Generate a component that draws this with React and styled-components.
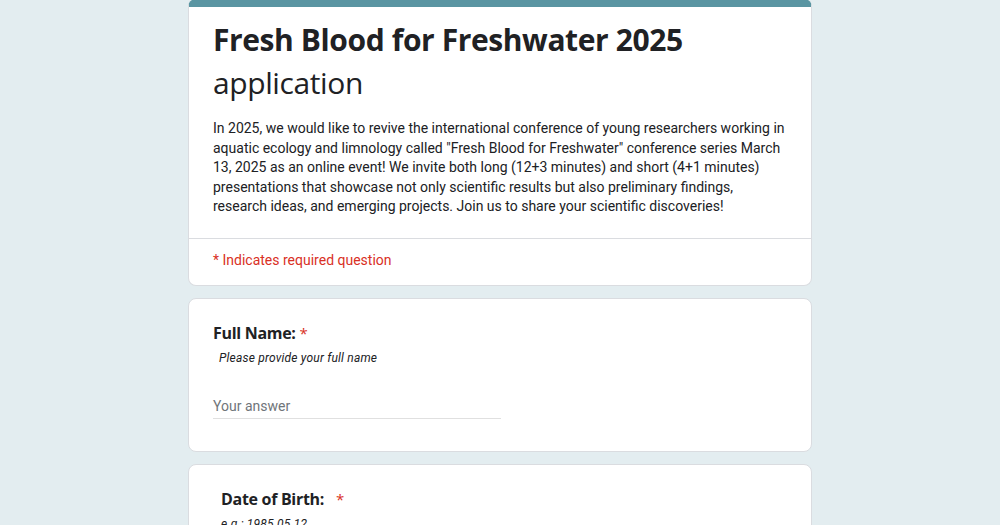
import styled, { createGlobalStyle } from 'styled-components';

const GlobalStyle = createGlobalStyle`
  body {
    margin: 0;
    background-color: #e3edf0;
    font-family: Roboto, "Liberation Sans", sans-serif;
  }
`;

export default function App() {
  return (
    <>
      <GlobalStyle />
      <Page>
        <HeaderCard>
          <Title>
            <strong>Fresh Blood for Freshwater 2025</strong>
            <span>application</span>
          </Title>
          <Description>
            In 2025, we would like to revive the international conference of young researchers working in
            aquatic ecology and limnology called "Fresh Blood for Freshwater" conference series March
            13, 2025 as an online event! We invite both long (12+3 minutes) and short (4+1 minutes)
            presentations that showcase not only scientific results but also preliminary findings,
            research ideas, and emerging projects. Join us to share your scientific discoveries!
          </Description>
          <Required>* Indicates required question</Required>
        </HeaderCard>

        <QuestionCard>
          <Label>
            Full Name: <Star>*</Star>
          </Label>
          <Hint>Please provide your full name</Hint>
          <Answer>Your answer</Answer>
        </QuestionCard>

        <QuestionCard $indent>
          <Label>
            Date of Birth: <Star $gap>*</Star>
          </Label>
          <Hint $flush>e.g.: 1985.05.12</Hint>
        </QuestionCard>
      </Page>
    </>
  );
}

const Page = styled.main`
  width: 624px;
  margin: 0 auto;
  display: flex;
  flex-direction: column;
  gap: 12px;
  height: 525px;
  overflow: hidden;
`;

const HeaderCard = styled.section`
  background-color: #fff;
  border: 1px solid #dadce0;
  border-top: 8px solid #5a95a2;
  border-radius: 8px;
  margin-top: -1px;
  box-sizing: border-box;
  flex-shrink: 0;
`;

const Title = styled.h1`
  margin: 0;
  padding: 11px 24px 0;
  display: flex;
  flex-direction: column;
  font-family: "Open Sans", sans-serif;
  font-size: 30px;
  line-height: 43px;
  color: #202124;
  letter-spacing: -0.4px;

  strong {
    font-weight: 700;
  }

  span {
    font-weight: 400;
  }
`;

const Description = styled.p`
  margin: 0;
  padding: 15px 24px 21px;
  font-size: 14px;
  line-height: 19.5px;
  color: #202124;
  border-bottom: 1px solid #dadce0;
`;

const Required = styled.div`
  padding: 11px 24px 15px;
  font-size: 14px;
  line-height: 20px;
  color: #d93025;
`;

const QuestionCard = styled.section`
  background-color: #fff;
  border: 1px solid #dadce0;
  border-radius: 8px;
  padding: ${({ $indent }) => ($indent ? '22px 24px 24px 32px' : '22px 24px 32px 24px')};
  flex-shrink: 0;
`;

const Label = styled.div`
  font-family: "Open Sans", sans-serif;
  font-size: 16px;
  font-weight: 700;
  line-height: 24px;
  color: #202124;
  letter-spacing: -0.3px;
`;

const Star = styled.span`
  color: #d93025;
  font-weight: 400;
  font-size: 15px;
  margin-left: ${({ $gap }) => ($gap ? '8px' : '0')};
`;

const Hint = styled.div`
  font-size: 12px;
  font-style: italic;
  line-height: 18px;
  color: #202124;
  padding-left: ${({ $flush }) => ($flush ? '0' : '6px')};
  margin-top: 4px;
  letter-spacing: 0.2px;
`;

const Answer = styled.div`
  margin-top: 29px;
  width: 288px;
  font-size: 14px;
  line-height: 20px;
  color: #70757a;
  padding-bottom: 2px;
  border-bottom: 1px solid #e0e0e0;
`;
